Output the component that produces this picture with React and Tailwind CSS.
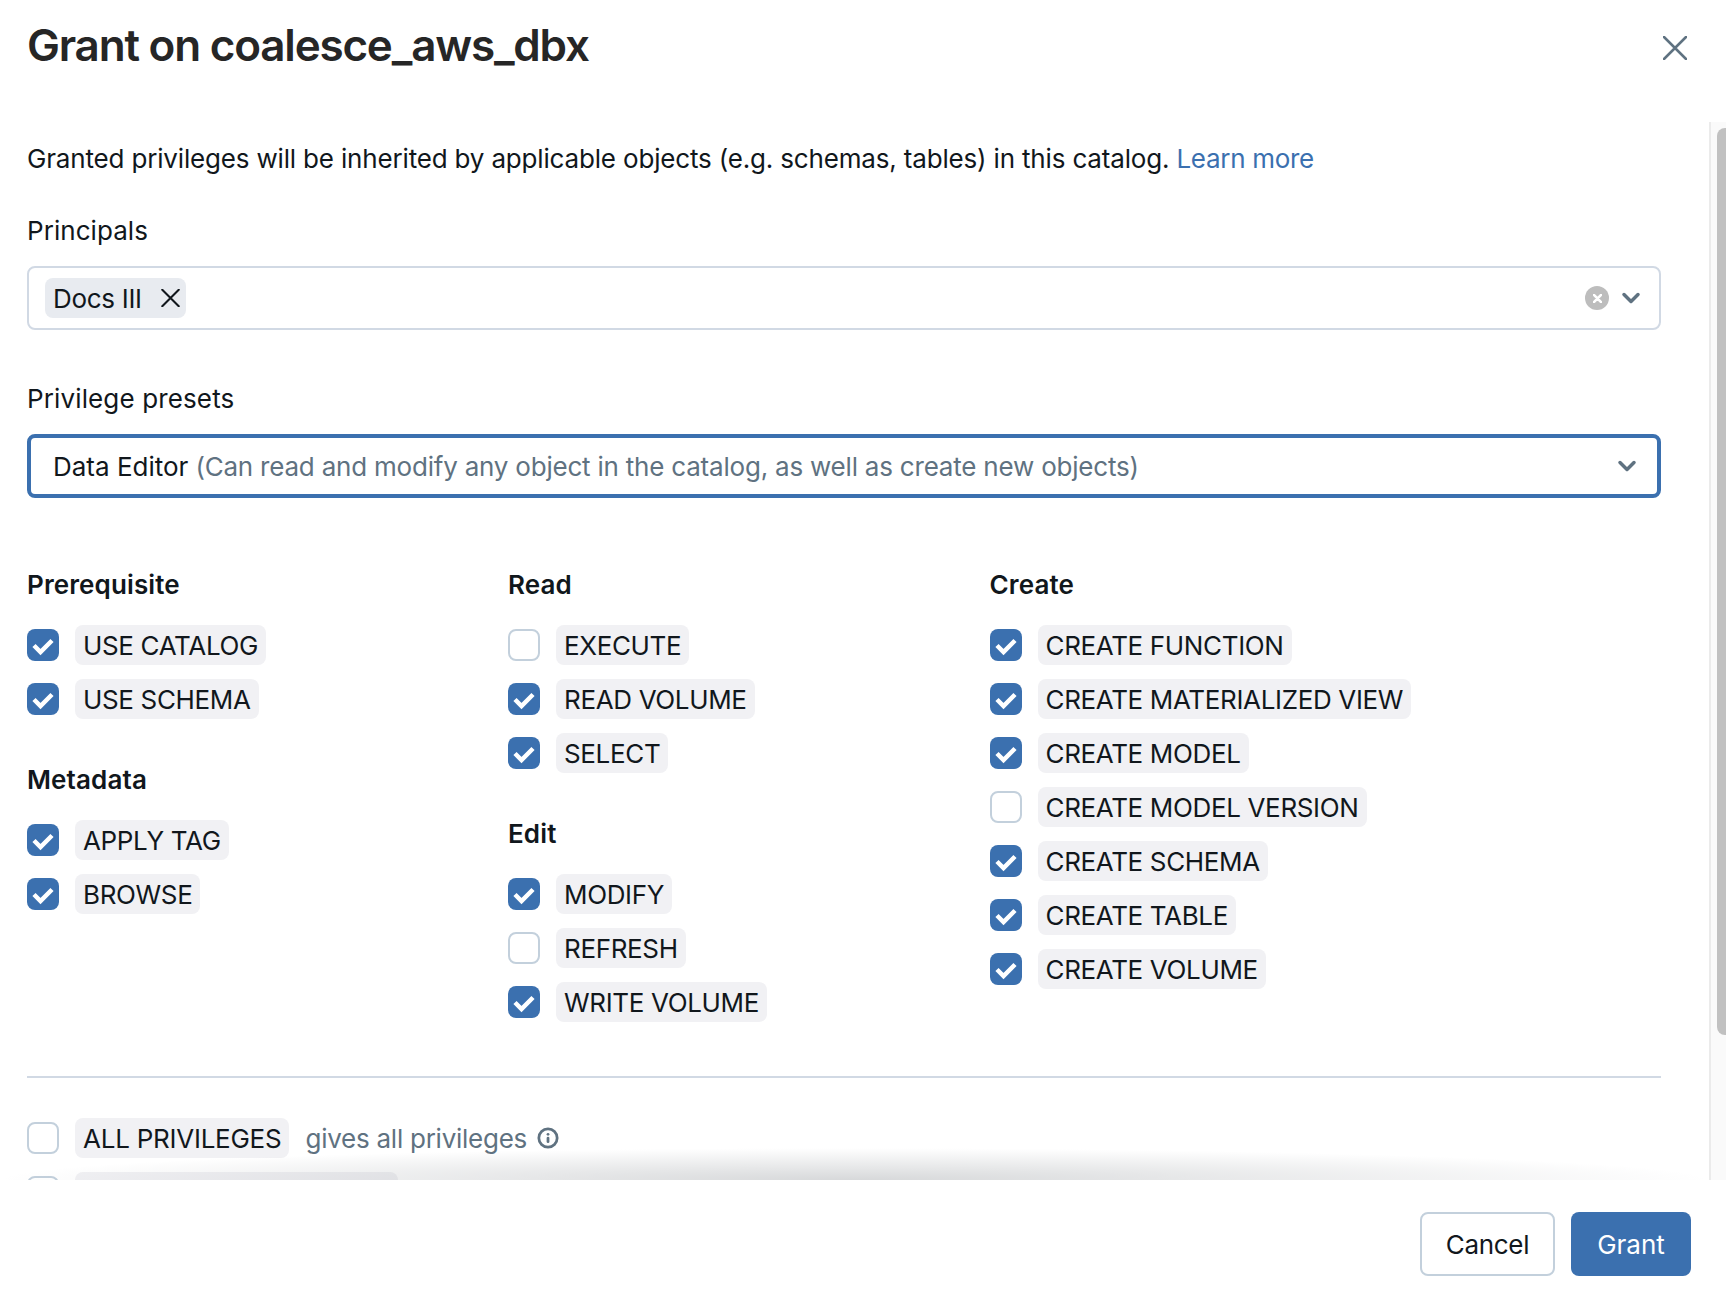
import { ChevronDown, Info } from "lucide-react";

const groups = [
  [
    { title: "Prerequisite", items: [["USE CATALOG", true], ["USE SCHEMA", true]] },
    { title: "Metadata", items: [["APPLY TAG", true], ["BROWSE", true]] },
  ],
  [
    { title: "Read", items: [["EXECUTE", false], ["READ VOLUME", true], ["SELECT", true]] },
    { title: "Edit", items: [["MODIFY", true], ["REFRESH", false], ["WRITE VOLUME", true]] },
  ],
  [
    {
      title: "Create",
      items: [
        ["CREATE FUNCTION", true],
        ["CREATE MATERIALIZED VIEW", true],
        ["CREATE MODEL", true],
        ["CREATE MODEL VERSION", false],
        ["CREATE SCHEMA", true],
        ["CREATE TABLE", true],
        ["CREATE VOLUME", true],
      ],
    },
  ],
];

function Cross({ className, strokeWidth = 2 }) {
  return (
    <svg viewBox="0 0 24 24" fill="none" stroke="currentColor" strokeWidth={strokeWidth} strokeLinecap="round" className={className}>
      <path d="M1 1L23 23M23 1L1 23" />
    </svg>
  );
}

function Checkbox({ checked }) {
  if (checked) {
    return (
      <span className="w-8 h-8 shrink-0 rounded-lg bg-[#3b70af]">
        <svg viewBox="0 0 32 32" fill="none" stroke="white" strokeWidth={4.5} className="w-8 h-8">
          <path d="M7 16.5L13.5 23L25 11.5" />
        </svg>
      </span>
    );
  }
  return <span className="w-8 h-8 shrink-0 rounded-lg border-2 border-[#c3d0dc] bg-white" />;
}

function PrivRow({ label, checked }) {
  return (
    <div className="flex items-center gap-4 h-10">
      <Checkbox checked={checked} />
      <span className="h-10 px-2 flex items-center rounded-lg bg-[#f1f1f4] text-[#11171c] text-[26px] tracking-[-0.35px]">{label}</span>
    </div>
  );
}

export default function App() {
  return (
    <div className="w-[1726px] h-[1310px] flex flex-col bg-white text-[#11171c] overflow-hidden font-['Inter',sans-serif]">
      <div className="h-[122px] shrink-0 flex items-start justify-between pl-[27px] pr-[39px]">
        <h1 className="text-[44px] leading-[56px] mt-[17px] font-semibold text-[#262626] tracking-[-1.2px]">Grant on coalesce_aws_dbx</h1>
        <Cross strokeWidth={2.5} className="w-6 h-6 text-[#5f7281] mt-[36px]" />
      </div>

      <div className="relative flex-1 flex min-h-0">
        <div className="flex-1 min-w-0 pl-[27px] pr-[48px] overflow-hidden">
          <p className="text-[26px] leading-[36px] mt-[19px] tracking-[-0.17px]">
            Granted privileges will be inherited by applicable objects (e.g. schemas, tables) in this catalog.{" "}
            <span className="text-[#3b70af] tracking-[-0.3px]">Learn more</span>
          </p>

          <div className="text-[26px] leading-[36px] mt-[36px] tracking-[0.05px]">Principals</div>
          <div className="mt-[17px] h-16 rounded-lg border-2 border-[#d1d9e4] flex items-center pl-4 pr-[14px]">
            <span className="h-10 pl-2 pr-[6px] flex items-center gap-[19px] rounded-lg bg-[#e8ebf0] text-[26px] tracking-[-0.3px]">
              Docs III
              <Cross strokeWidth={2.75} className="w-[19px] h-[18px] text-[#11171c]" />
            </span>
            <span className="ml-auto w-6 h-6 rounded-full bg-[#bdbdbd] flex items-center justify-center">
              <Cross strokeWidth={7} className="w-[9px] h-[9px] text-white" />
            </span>
            <ChevronDown size={28} strokeWidth={3} className="text-[#5f7281] ml-2" />
          </div>

          <div className="text-[26px] leading-[36px] mt-[51px] tracking-[0.13px]">Privilege presets</div>
          <div className="mt-[17px] h-16 rounded-lg border-4 border-[#3b70af] flex items-center pl-[22px] pr-4">
            <span className="text-[26px]">Data Editor</span>
            <span className="text-[26px] text-[#5f7281] ml-[7px] tracking-[-0.21px]">(Can read and modify any object in the catalog, as well as create new objects)</span>
            <ChevronDown size={28} strokeWidth={3} className="text-[#5f7281] ml-auto" />
          </div>

          <div className="grid grid-cols-[481px_481.5px_1fr] mt-[69px]">
            {groups.map((col, i) => (
              <div key={i} className="flex flex-col gap-[43px]">
                {col.map((g) => (
                  <div key={g.title}>
                    <div className="text-[26px] leading-[36px] font-semibold mb-[22px] tracking-[0.12px]">{g.title}</div>
                    <div className="flex flex-col gap-[14px]">
                      {g.items.map(([label, checked]) => (
                        <PrivRow key={label} label={label} checked={checked} />
                      ))}
                    </div>
                  </div>
                ))}
              </div>
            ))}
          </div>

          <div className="border-t-2 border-[#d1d9e4] mt-[54px]" />

          <div className="flex items-center gap-4 mt-[40px]">
            <Checkbox checked={false} />
            <span className="h-10 px-2 flex items-center rounded-lg bg-[#f1f1f4] text-[26px] tracking-[-0.25px]">ALL PRIVILEGES</span>
            <span className="text-[26px] text-[#5f7281] tracking-[-0.25px]">gives all privileges</span>
            <Info size={22} strokeWidth={3} className="text-[#5f7281] -ml-[6px]" />
          </div>
          <div className="flex items-center gap-4 mt-[14px]">
            <Checkbox checked={false} />
            <span className="h-10 w-[323px] rounded-lg bg-[#f1f1f4]" />
          </div>
        </div>

        {/* scroll shadow sitting over the bottom of the list */}
        <div className="absolute left-0 right-[17px] bottom-0 h-[32px] bg-[radial-gradient(50%_100%_at_50%_100%,rgba(130,135,140,0.32),rgba(130,135,140,0))]" />

        <div className="w-[17px] shrink-0 border-l-2 border-[#ebebeb] bg-[#fafafa] pl-[6px]">
          <div className="mt-[6px] h-[907px] rounded-tl-lg rounded-bl-lg bg-[#c1c1c1]" />
        </div>
      </div>

      <div className="h-[130px] shrink-0 flex items-start justify-end gap-4 pt-[32px] pr-[35px]">
        <button className="w-[135px] h-16 rounded-lg border-2 border-[#c3d0dc] bg-white text-[26px] text-[#11171c] tracking-[-0.3px]">Cancel</button>
        <button className="w-[120px] h-16 rounded-lg bg-[#3b70af] text-[26px] text-white">Grant</button>
      </div>
    </div>
  );
}
